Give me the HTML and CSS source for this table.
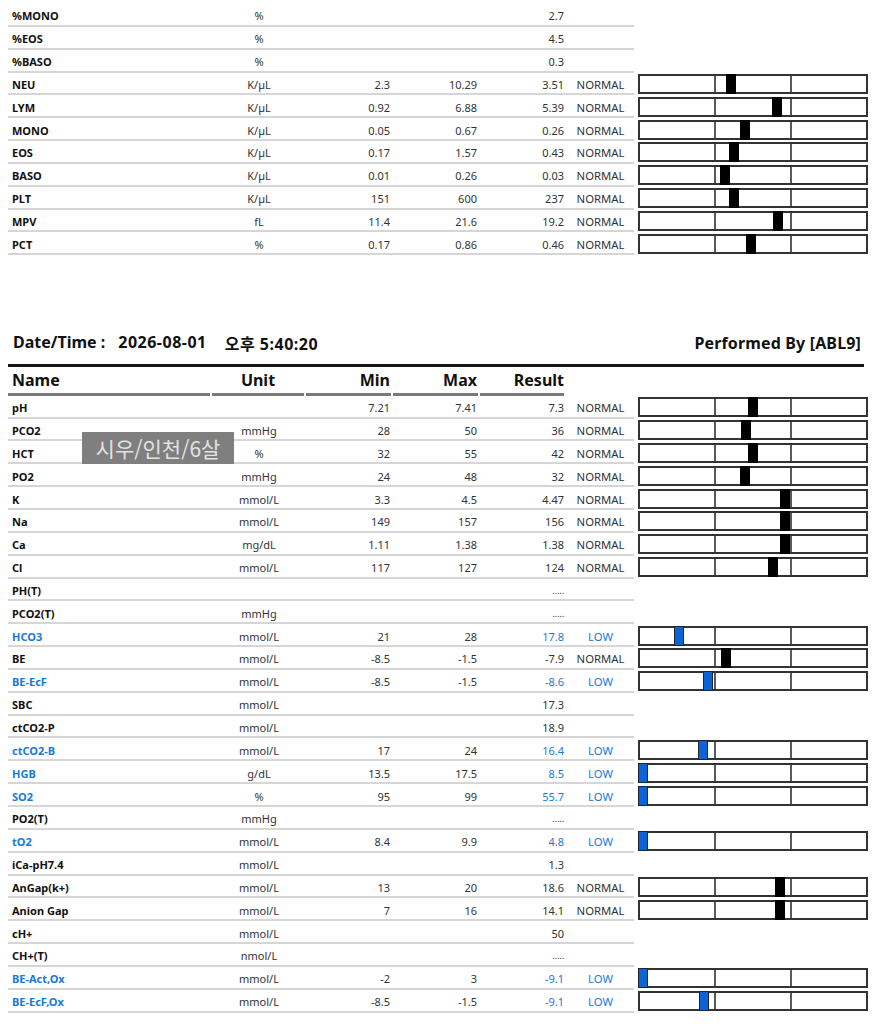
FILE: index.html
```html
<!DOCTYPE html>
<html lang="ko">
<head>
<meta charset="utf-8">
<link rel="stylesheet" href="styles.css">
<title>Lab Report</title>
</head>
<body>
<div class="page">
  <div class="table top">
    <div class="row"><div class="c name">%MONO</div><div class="c unit">%</div><div class="c num"></div><div class="c num"></div><div class="c num res">2.7</div><div class="c st"></div><div class="gap"></div><div></div></div>
    <div class="row"><div class="c name">%EOS</div><div class="c unit">%</div><div class="c num"></div><div class="c num"></div><div class="c num res">4.5</div><div class="c st"></div><div class="gap"></div><div></div></div>
    <div class="row"><div class="c name">%BASO</div><div class="c unit">%</div><div class="c num"></div><div class="c num"></div><div class="c num res">0.3</div><div class="c st"></div><div class="gap"></div><div></div></div>
    <div class="row"><div class="c name">NEU</div><div class="c unit">K/µL</div><div class="c num">2.3</div><div class="c num">10.29</div><div class="c num res">3.51</div><div class="c st">NORMAL</div><div class="gap"></div><div class="bar"><i></i><i></i><i></i><b class="mk" style="left:86px"></b></div></div>
    <div class="row"><div class="c name">LYM</div><div class="c unit">K/µL</div><div class="c num">0.92</div><div class="c num">6.88</div><div class="c num res">5.39</div><div class="c st">NORMAL</div><div class="gap"></div><div class="bar"><i></i><i></i><i></i><b class="mk" style="left:132px"></b></div></div>
    <div class="row"><div class="c name">MONO</div><div class="c unit">K/µL</div><div class="c num">0.05</div><div class="c num">0.67</div><div class="c num res">0.26</div><div class="c st">NORMAL</div><div class="gap"></div><div class="bar"><i></i><i></i><i></i><b class="mk" style="left:100px"></b></div></div>
    <div class="row"><div class="c name">EOS</div><div class="c unit">K/µL</div><div class="c num">0.17</div><div class="c num">1.57</div><div class="c num res">0.43</div><div class="c st">NORMAL</div><div class="gap"></div><div class="bar"><i></i><i></i><i></i><b class="mk" style="left:89px"></b></div></div>
    <div class="row"><div class="c name">BASO</div><div class="c unit">K/µL</div><div class="c num">0.01</div><div class="c num">0.26</div><div class="c num res">0.03</div><div class="c st">NORMAL</div><div class="gap"></div><div class="bar"><i></i><i></i><i></i><b class="mk" style="left:80px"></b></div></div>
    <div class="row"><div class="c name">PLT</div><div class="c unit">K/µL</div><div class="c num">151</div><div class="c num">600</div><div class="c num res">237</div><div class="c st">NORMAL</div><div class="gap"></div><div class="bar"><i></i><i></i><i></i><b class="mk" style="left:89px"></b></div></div>
    <div class="row"><div class="c name">MPV</div><div class="c unit">fL</div><div class="c num">11.4</div><div class="c num">21.6</div><div class="c num res">19.2</div><div class="c st">NORMAL</div><div class="gap"></div><div class="bar"><i></i><i></i><i></i><b class="mk" style="left:133px"></b></div></div>
    <div class="row"><div class="c name">PCT</div><div class="c unit">%</div><div class="c num">0.17</div><div class="c num">0.86</div><div class="c num res">0.46</div><div class="c st">NORMAL</div><div class="gap"></div><div class="bar"><i></i><i></i><i></i><b class="mk" style="left:106px"></b></div></div>
  </div>

  <div class="section">
    <div class="datebar">
      <div class="dt"><span>Date/Time :</span><span class="d">2026-08-01</span><span class="t">오후 5:40:20</span></div>
      <div class="by">Performed By [ABL9]</div>
    </div>
    <div class="table">
      <div class="row head"><div class="h name">Name</div><div class="h unit">Unit</div><div class="h num">Min</div><div class="h num">Max</div><div class="h num res">Result</div><div></div><div></div><div></div></div>
      <div class="row"><div class="c name">pH</div><div class="c unit"></div><div class="c num">7.21</div><div class="c num">7.41</div><div class="c num res">7.3</div><div class="c st">NORMAL</div><div class="gap"></div><div class="bar"><i></i><i></i><i></i><b class="mk" style="left:108px"></b></div></div>
      <div class="row"><div class="c name">PCO2</div><div class="c unit">mmHg</div><div class="c num">28</div><div class="c num">50</div><div class="c num res">36</div><div class="c st">NORMAL</div><div class="gap"></div><div class="bar"><i></i><i></i><i></i><b class="mk" style="left:101px"></b></div></div>
      <div class="row"><div class="c name">HCT</div><div class="c unit">%</div><div class="c num">32</div><div class="c num">55</div><div class="c num res">42</div><div class="c st">NORMAL</div><div class="gap"></div><div class="bar"><i></i><i></i><i></i><b class="mk" style="left:108px"></b></div></div>
      <div class="row"><div class="c name">PO2</div><div class="c unit">mmHg</div><div class="c num">24</div><div class="c num">48</div><div class="c num res">32</div><div class="c st">NORMAL</div><div class="gap"></div><div class="bar"><i></i><i></i><i></i><b class="mk" style="left:100px"></b></div></div>
      <div class="row"><div class="c name">K</div><div class="c unit">mmol/L</div><div class="c num">3.3</div><div class="c num">4.5</div><div class="c num res">4.47</div><div class="c st">NORMAL</div><div class="gap"></div><div class="bar"><i></i><i></i><i></i><b class="mk" style="left:140px"></b></div></div>
      <div class="row"><div class="c name">Na</div><div class="c unit">mmol/L</div><div class="c num">149</div><div class="c num">157</div><div class="c num res">156</div><div class="c st">NORMAL</div><div class="gap"></div><div class="bar"><i></i><i></i><i></i><b class="mk" style="left:140px"></b></div></div>
      <div class="row"><div class="c name">Ca</div><div class="c unit">mg/dL</div><div class="c num">1.11</div><div class="c num">1.38</div><div class="c num res">1.38</div><div class="c st">NORMAL</div><div class="gap"></div><div class="bar"><i></i><i></i><i></i><b class="mk" style="left:140px"></b></div></div>
      <div class="row"><div class="c name">Cl</div><div class="c unit">mmol/L</div><div class="c num">117</div><div class="c num">127</div><div class="c num res">124</div><div class="c st">NORMAL</div><div class="gap"></div><div class="bar"><i></i><i></i><i></i><b class="mk" style="left:128px"></b></div></div>
      <div class="row"><div class="c name">PH(T)</div><div class="c unit"></div><div class="c num"></div><div class="c num"></div><div class="c num res dots">.....</div><div class="c st"></div><div class="gap"></div><div></div></div>
      <div class="row"><div class="c name">PCO2(T)</div><div class="c unit">mmHg</div><div class="c num"></div><div class="c num"></div><div class="c num res dots">.....</div><div class="c st"></div><div class="gap"></div><div></div></div>
      <div class="row low"><div class="c name">HCO3</div><div class="c unit">mmol/L</div><div class="c num">21</div><div class="c num">28</div><div class="c num res">17.8</div><div class="c st">LOW</div><div class="gap"></div><div class="bar"><i></i><i></i><i></i><b class="mk" style="left:34px"></b></div></div>
      <div class="row"><div class="c name">BE</div><div class="c unit">mmol/L</div><div class="c num">-8.5</div><div class="c num">-1.5</div><div class="c num res">-7.9</div><div class="c st">NORMAL</div><div class="gap"></div><div class="bar"><i></i><i></i><i></i><b class="mk" style="left:81px"></b></div></div>
      <div class="row low"><div class="c name">BE-EcF</div><div class="c unit">mmol/L</div><div class="c num">-8.5</div><div class="c num">-1.5</div><div class="c num res">-8.6</div><div class="c st">LOW</div><div class="gap"></div><div class="bar"><i></i><i></i><i></i><b class="mk" style="left:63px"></b></div></div>
      <div class="row"><div class="c name">SBC</div><div class="c unit">mmol/L</div><div class="c num"></div><div class="c num"></div><div class="c num res">17.3</div><div class="c st"></div><div class="gap"></div><div></div></div>
      <div class="row"><div class="c name">ctCO2-P</div><div class="c unit">mmol/L</div><div class="c num"></div><div class="c num"></div><div class="c num res">18.9</div><div class="c st"></div><div class="gap"></div><div></div></div>
      <div class="row low"><div class="c name">ctCO2-B</div><div class="c unit">mmol/L</div><div class="c num">17</div><div class="c num">24</div><div class="c num res">16.4</div><div class="c st">LOW</div><div class="gap"></div><div class="bar"><i></i><i></i><i></i><b class="mk" style="left:58px"></b></div></div>
      <div class="row low"><div class="c name">HGB</div><div class="c unit">g/dL</div><div class="c num">13.5</div><div class="c num">17.5</div><div class="c num res">8.5</div><div class="c st">LOW</div><div class="gap"></div><div class="bar"><i></i><i></i><i></i><b class="mk" style="left:-2px"></b></div></div>
      <div class="row low"><div class="c name">SO2</div><div class="c unit">%</div><div class="c num">95</div><div class="c num">99</div><div class="c num res">55.7</div><div class="c st">LOW</div><div class="gap"></div><div class="bar"><i></i><i></i><i></i><b class="mk" style="left:-2px"></b></div></div>
      <div class="row"><div class="c name">PO2(T)</div><div class="c unit">mmHg</div><div class="c num"></div><div class="c num"></div><div class="c num res dots">.....</div><div class="c st"></div><div class="gap"></div><div></div></div>
      <div class="row low"><div class="c name">tO2</div><div class="c unit">mmol/L</div><div class="c num">8.4</div><div class="c num">9.9</div><div class="c num res">4.8</div><div class="c st">LOW</div><div class="gap"></div><div class="bar"><i></i><i></i><i></i><b class="mk" style="left:-2px"></b></div></div>
      <div class="row"><div class="c name">iCa-pH7.4</div><div class="c unit">mmol/L</div><div class="c num"></div><div class="c num"></div><div class="c num res">1.3</div><div class="c st"></div><div class="gap"></div><div></div></div>
      <div class="row"><div class="c name">AnGap(k+)</div><div class="c unit">mmol/L</div><div class="c num">13</div><div class="c num">20</div><div class="c num res">18.6</div><div class="c st">NORMAL</div><div class="gap"></div><div class="bar"><i></i><i></i><i></i><b class="mk" style="left:135px"></b></div></div>
      <div class="row"><div class="c name">Anion Gap</div><div class="c unit">mmol/L</div><div class="c num">7</div><div class="c num">16</div><div class="c num res">14.1</div><div class="c st">NORMAL</div><div class="gap"></div><div class="bar"><i></i><i></i><i></i><b class="mk" style="left:135px"></b></div></div>
      <div class="row"><div class="c name">cH+</div><div class="c unit">mmol/L</div><div class="c num"></div><div class="c num"></div><div class="c num res">50</div><div class="c st"></div><div class="gap"></div><div></div></div>
      <div class="row"><div class="c name">CH+(T)</div><div class="c unit">nmol/L</div><div class="c num"></div><div class="c num"></div><div class="c num res dots">.....</div><div class="c st"></div><div class="gap"></div><div></div></div>
      <div class="row low"><div class="c name">BE-Act,Ox</div><div class="c unit">mmol/L</div><div class="c num">-2</div><div class="c num">3</div><div class="c num res">-9.1</div><div class="c st">LOW</div><div class="gap"></div><div class="bar"><i></i><i></i><i></i><b class="mk" style="left:-2px"></b></div></div>
      <div class="row low"><div class="c name">BE-EcF,Ox</div><div class="c unit">mmol/L</div><div class="c num">-8.5</div><div class="c num">-1.5</div><div class="c num res">-9.1</div><div class="c st">LOW</div><div class="gap"></div><div class="bar"><i></i><i></i><i></i><b class="mk" style="left:59px"></b></div></div>
    </div>
    <div class="stamp">시우/인천/6살</div>
  </div>
</div>
</body>
</html>
```
FILE: styles.css
```css
* { box-sizing: border-box; }
html, body { margin: 0; padding: 0; background: #fff; }
body {
  font-family: "Noto Sans", "Noto Sans CJK KR", sans-serif;
  color: #222;
  font-size: 11px;
}
.page { padding: 4px 0 0 8px; width: 882px; }
.row {
  display: grid;
  grid-template-columns: 204px 94px 87px 87px 86px 68px 4px 230px;
  height: 22.85px;
  align-items: stretch;
}
.c {
  border-bottom: 2px solid #d6d6d6;
  padding-top: 3px;
  display: flex;
  align-items: center;
  white-space: nowrap;
  color: #333;
}
.name { padding-left: 4px; font-weight: 700; color: #111; }
.unit { justify-content: center; }
.num { justify-content: flex-end; padding-right: 3px; }
.num.res { padding-right: 2px; }
.st { justify-content: center; padding-left: 1px; font-size: 11.3px; }
.dots { font-size: 9.5px; letter-spacing: -0.2px; }
.low .c.name, .low .c.res, .low .c.st { color: #1a7ad6; }
.bar {
  position: relative;
  align-self: center;
  height: 20px;
  border: 2px solid #333;
  display: flex;
  background: #fff;
}
.bar i { flex: 1; }
.bar i + i { border-left: 2px solid #5a5a5a; }
.mk {
  position: absolute;
  top: -2px;
  bottom: -2px;
  width: 10px;
  background: #000;
}
.low .mk { background: #0a64d6; border: 1px solid #223; }

.section { position: relative; margin-top: 76px; }
.datebar {
  display: flex;
  justify-content: space-between;
  align-items: center;
  height: 36px;
  padding: 0 3px 9px 5px;
  border-bottom: 3px solid #151515;
  width: 856px;
  font-size: 16px;
  font-weight: 700;
  color: #111;
}
.dt { display: flex; gap: 13px; }
.dt .d { letter-spacing: 0.5px; }
.dt .t { margin-left: 5px; letter-spacing: 0.5px; }
.by { letter-spacing: 0.15px; }
.row.head { height: 28.5px; }
.h {
  border-bottom: 3px solid #7a7a7a;
  margin-right: 2px;
  display: flex;
  align-items: center;
  font-size: 16px;
  font-weight: 700;
  color: #111;
}
.h.name { padding-left: 4px; }
.h.num { padding-right: 1px; }
.h.res { padding-right: 0; }
.stamp {
  position: absolute;
  left: 74px;
  top: 101px;
  width: 152px;
  height: 32px;
  background: #7f7f7f;
  color: #e2e2e2;
  font-size: 21px;
  font-weight: 400;
  display: flex;
  align-items: center;
  justify-content: center;
  font-family: "Noto Sans CJK KR", sans-serif;
}
```
